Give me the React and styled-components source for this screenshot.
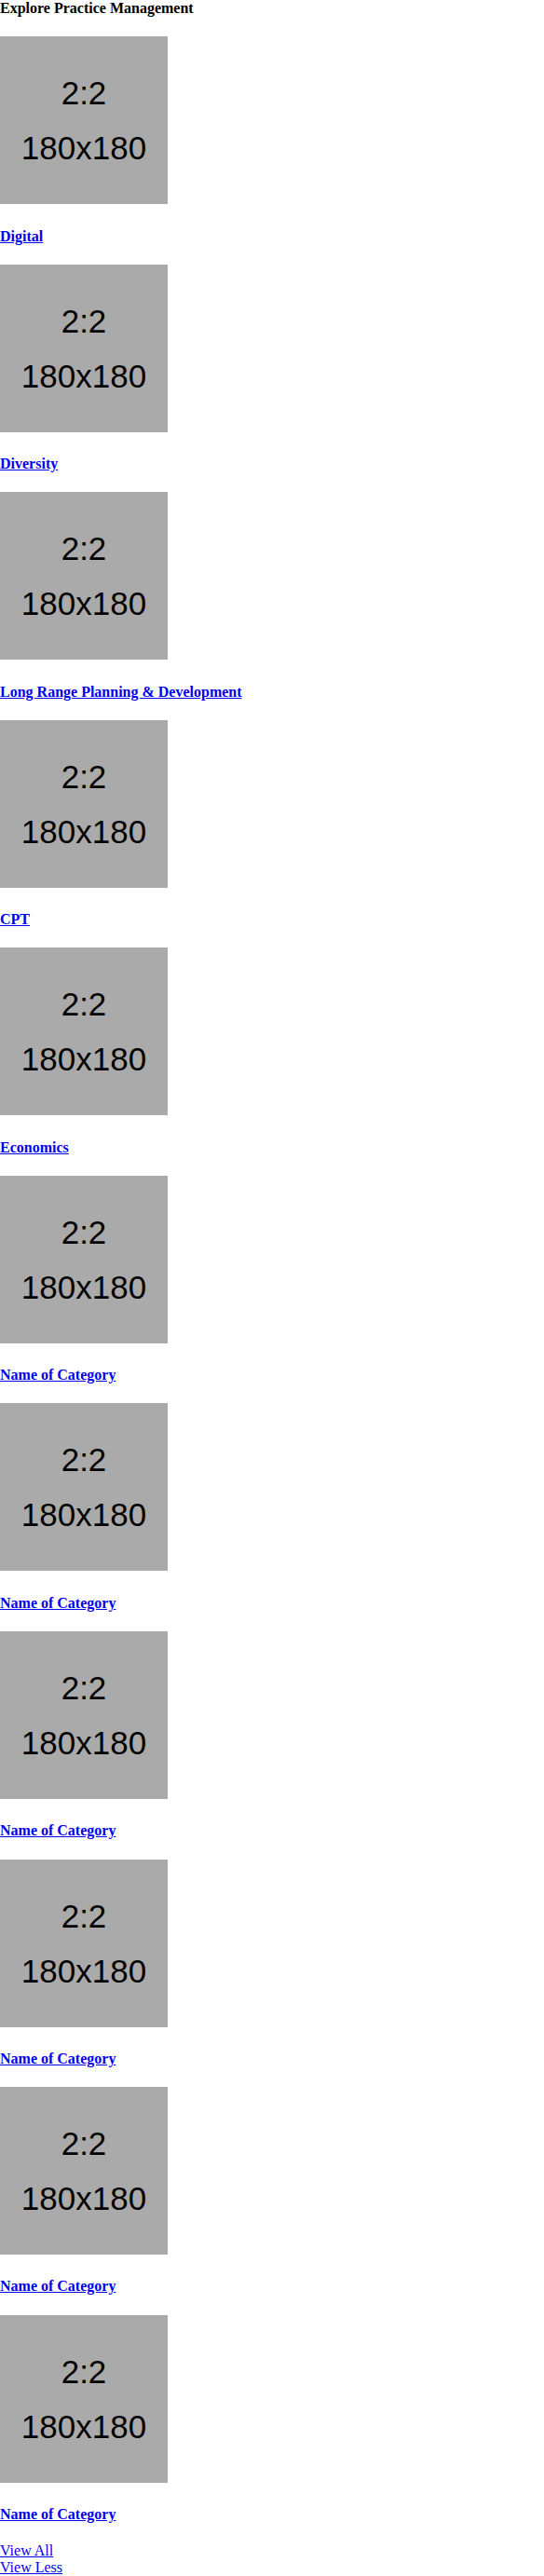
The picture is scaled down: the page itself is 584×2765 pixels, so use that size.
import React from "react";
import styled, { createGlobalStyle } from "styled-components";

const Global = createGlobalStyle`
  body {
    margin: 0;
    font-family: "Liberation Serif", "Times New Roman", serif;
    font-size: 16px;
    color: #000;
    background: #fff;
  }
`;

const Page = styled.div``;

const Title = styled.h4`
  margin: 0 0 21.28px;
  font-size: 16px;
  font-weight: bold;
`;

const Item = styled.div``;

const Thumb = styled.div`
  line-height: normal;
`;

const Heading = styled.h4`
  margin: 21.28px 0;
  font-size: 16px;
  font-weight: bold;
`;

const Link = styled.a`
  color: #0000ee;
  text-decoration: underline;
`;

const Footer = styled.div`
  display: flex;
  flex-direction: column;
  align-items: flex-start;
`;

const Placeholder = () => (
  <svg width="180" height="180" viewBox="0 0 180 180">
    <rect width="180" height="180" fill="#aaaaaa" />
    <text
      x="90"
      y="72.7"
      textAnchor="middle"
      fontFamily="'Liberation Sans', Arial, sans-serif"
      fontSize="35"
      fill="#000"
    >
      2:2
    </text>
    <text
      x="90"
      y="131.7"
      textAnchor="middle"
      fontFamily="'Liberation Sans', Arial, sans-serif"
      fontSize="35"
      fill="#000"
    >
      180x180
    </text>
  </svg>
);

const categories = [
  "Digital",
  "Diversity",
  "Long Range Planning & Development",
  "CPT",
  "Economics",
  "Name of Category",
  "Name of Category",
  "Name of Category",
  "Name of Category",
  "Name of Category",
  "Name of Category",
];

export default function App() {
  return (
    <Page>
      <Global />
      <Title>Explore Practice Management</Title>
      {categories.map((c, i) => (
        <Item key={i}>
          <Thumb>
            <Link href="#">
              <Placeholder />
            </Link>
          </Thumb>
          <Heading>
            <Link href="#">{c}</Link>
          </Heading>
        </Item>
      ))}
      <Footer>
        <Link href="#">View All</Link>
        <Link href="#">View Less</Link>
      </Footer>
    </Page>
  );
}
